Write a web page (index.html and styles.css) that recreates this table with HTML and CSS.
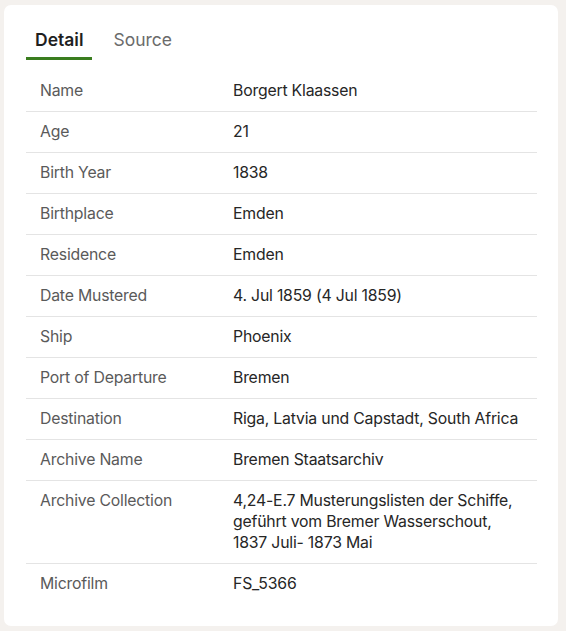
FILE: index.html
```html
<!DOCTYPE html>
<html>
<head>
<meta charset="utf-8">
<link rel="stylesheet" href="styles.css">
</head>
<body>
<div class="card">
  <div class="tabs">
    <div class="tab active">Detail</div>
    <div class="tab">Source</div>
  </div>
  <div class="table">
    <div class="row"><div class="label">Name</div><div class="value">Borgert Klaassen</div></div>
    <div class="row"><div class="label">Age</div><div class="value">21</div></div>
    <div class="row"><div class="label">Birth Year</div><div class="value">1838</div></div>
    <div class="row"><div class="label">Birthplace</div><div class="value">Emden</div></div>
    <div class="row"><div class="label">Residence</div><div class="value">Emden</div></div>
    <div class="row"><div class="label">Date Mustered</div><div class="value">4. Jul 1859 (4 Jul 1859)</div></div>
    <div class="row"><div class="label">Ship</div><div class="value">Phoenix</div></div>
    <div class="row"><div class="label">Port of Departure</div><div class="value">Bremen</div></div>
    <div class="row"><div class="label">Destination</div><div class="value">Riga, Latvia und Capstadt, South Africa</div></div>
    <div class="row"><div class="label">Archive Name</div><div class="value">Bremen Staatsarchiv</div></div>
    <div class="row"><div class="label">Archive Collection</div><div class="value">4,24-E.7 Musterungslisten der Schiffe, geführt vom Bremer Wasserschout, 1837 Juli- 1873 Mai</div></div>
    <div class="row last"><div class="label">Microfilm</div><div class="value">FS_5366</div></div>
  </div>
</div>
</body>
</html>
```
FILE: styles.css
```css
html, body {
  margin: 0;
  padding: 0;
  background: #f4f1ee;
}
body {
  padding: 5px 8px 6px 4px;
  font-family: Inter, "Liberation Sans", sans-serif;
}
.card {
  background: #ffffff;
  border-radius: 7px;
  width: 554px;
  box-sizing: border-box;
  padding: 21px 21px 22px 22px;
}
.tabs {
  display: flex;
  gap: 12px;
  margin-bottom: 11px;
}
.tab {
  font-size: 17.5px;
  line-height: 24px;
  color: #6b6b6b;
  padding: 2px 9px 5px 9px;
  border-bottom: 3px solid transparent;
}
.tab.active {
  color: #1f1f1f;
  font-weight: 600;
  border-bottom-color: #3a7d1f;
}
.row {
  display: flex;
  border-bottom: 1px solid #e4e4e4;
  padding: 9px 0 10px 0;
  font-size: 15.8px;
  line-height: 21px;
  letter-spacing: -0.2px;
}
.row.last {
  border-bottom: none;
}
.label {
  width: 193px;
  padding-left: 14px;
  color: #5a5a5a;
  flex-shrink: 0;
}
.value {
  color: #262626;
  width: 290px;
}
```
